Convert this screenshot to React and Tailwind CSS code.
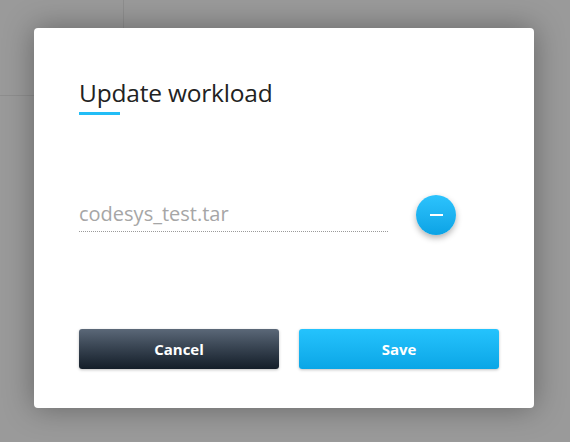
import React from 'react';

const App = () => {
  return (
    <div className="relative w-[570px] h-[442px] overflow-hidden bg-[#9a9a9a] font-['Open_Sans',sans-serif]">
      {/* page behind the overlay */}
      <div className="absolute left-[123px] top-0 h-[28px] w-px bg-[#8e8e8e]" />
      <div className="absolute left-0 top-[95px] h-px w-[34px] bg-[#8e8e8e]" />

      <div className="relative pt-[28px] pl-[34px]">
        <div className="w-[500px] h-[380px] bg-white rounded-[4px] shadow-[0_0_30px_rgba(0,0,0,0.35)] pl-[45px] pr-[35px] pt-[51px] flex flex-col">
          {/* Header */}
          <h2 className="text-[24.5px] leading-[28px] font-medium text-[#222] tracking-[-0.2px]">Update workload</h2>
          <div className="mt-[5px] h-[3px] w-[41px] bg-[#22bdf6]" />

          {/* Field */}
          <div className="mt-[82px] flex items-center">
            <div className="w-[309px] border-b border-dotted border-[#9a9a9a] pb-[4px] pt-[2px]">
              <span className="text-[20px] leading-[24px] text-[#a6a6a6]">codesys_test.tar</span>
            </div>
            <button className="ml-[28px] -mt-[2px] w-[40px] h-[40px] rounded-full bg-gradient-to-b from-[#2cc3fd] to-[#0aa3e5] shadow-[0_3px_6px_rgba(0,0,0,0.3)] flex items-center justify-center">
              <span className="block w-[13px] h-[2px] bg-white" />
            </button>
          </div>

          {/* Actions */}
          <div className="mt-[94px] flex gap-[20px]">
            <button className="w-[200px] h-[40px] rounded-[3px] bg-gradient-to-b from-[#5b6878] to-[#141e29] text-white text-[15px] font-bold shadow-[0_1px_3px_rgba(0,0,0,0.25)]">
              Cancel
            </button>
            <button className="w-[200px] h-[40px] rounded-[3px] bg-gradient-to-b from-[#24c3fd] to-[#09a6e6] text-white text-[15px] font-bold shadow-[0_1px_3px_rgba(0,0,0,0.25)]">
              Save
            </button>
          </div>
        </div>
      </div>
    </div>
  );
};

export default App;
